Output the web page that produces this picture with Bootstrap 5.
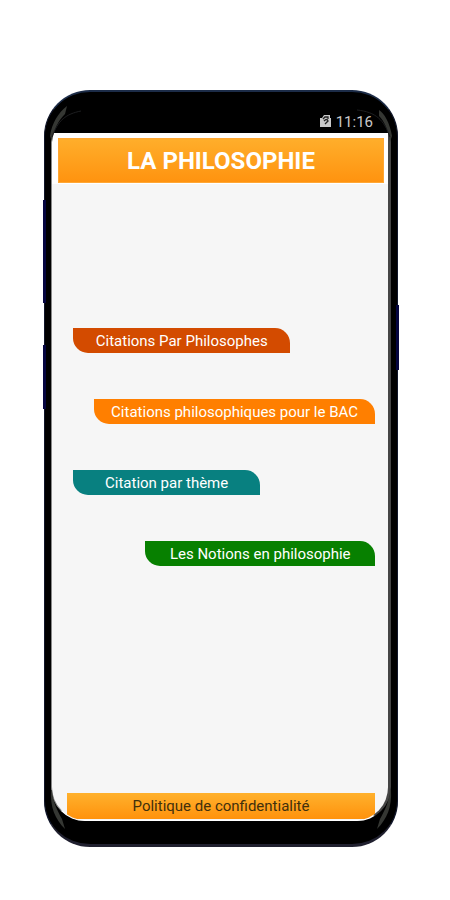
<!DOCTYPE html>
<html lang="fr">
<head>
<meta charset="utf-8">
<meta name="viewport" content="width=device-width, initial-scale=1">
<title>La Philosophie</title>
<link href="https://cdn.jsdelivr.net/npm/bootstrap@5.3.0/dist/css/bootstrap.min.css" rel="stylesheet">
<style>
body { background: #fff; font-family: Roboto, "Noto Sans", sans-serif; }
.stage { min-height: 100vh; padding: 90px 52px 53px 44px; }
.phone { background: #000; border: 1px solid #10162a; border-top: 2px solid #1c2c48; border-bottom: 3px solid #20202f; border-radius: 46px; padding: 0 6px 23px; }
.side-key { width: 3px; background: #05053f; }
.key-volume { left: -2px; top: 108px; height: 103px; }
.key-assist { left: -2px; top: 253px; height: 64px; }
.key-power { right: -2px; top: 213px; height: 65px; }
.glint { width: 38px; height: 46px; }
.glint-tl { left: 2px; top: 10px; }
.glint-tr { right: 2px; top: 10px; transform: scaleX(-1); }
.glint-bl { left: 2px; bottom: 8px; transform: scaleY(-1); }
.glint-br { right: 2px; bottom: 8px; transform: scale(-1); }
.status { height: 41px; padding: 0 18px 1px 0; color: #c9c9c9; font-size: 15px; line-height: 20px; }
.screen { background: #f6f6f6; border-left: 1px solid #888; border-right: 3px solid #454545; border-bottom: 1px solid #fff; border-radius: 0 0 34px 34px; }
.title-frame { background: #fff; padding: 5px 4px 1px 6px; }
.title-bar { background: linear-gradient(#ffae2b, #ff930f); border: 1px solid #ffa735; height: 45px; font-size: 24px; line-height: 28px; font-weight: 700; color: #fff; }
.menu { gap: 46px; padding: 0 13px 84px 21px; }
.leaf { height: 25px; border-radius: 0 15px 0 15px; color: #fff; font-size: 15px; line-height: 26px; }
.leaf:hover { color: #fff; }
.leaf-red { background: #d34b00; width: 72%; }
.leaf-orange { background: #ff7f00; width: 93%; }
.leaf-teal { background: #088080; width: 62%; }
.leaf-green { background: #078000; width: 76%; }
.foot { padding: 0 13px 1px 15px; }
.privacy { background: linear-gradient(#ffb12d, #ff920c); height: 26px; color: #42300c; font-size: 15px; line-height: 26px; }
</style>
<script src="https://cdn.jsdelivr.net/npm/bootstrap@5.3.0/dist/js/bootstrap.bundle.min.js"></script>
</head>
<body>
<div class="stage d-flex">
  <div class="phone position-relative flex-fill d-flex flex-column">
    <span class="side-key key-volume position-absolute"></span>
    <span class="side-key key-assist position-absolute"></span>
    <span class="side-key key-power position-absolute"></span>
    <svg class="glint glint-tl position-absolute" viewBox="0 0 38 46" aria-hidden="true"><path d="M3 34C5 21 11 11 20 4L18 12C11 19 7 27 5 40Z" fill="#353733"/><path d="M5 35C11 18 19 12 34 9" fill="none" stroke="#1d1e20"/></svg>
    <svg class="glint glint-tr position-absolute" viewBox="0 0 38 46" aria-hidden="true"><path d="M3 34C5 21 11 11 16 8L16 14C11 19 7 27 5 40Z" fill="#353733"/><path d="M5 35C11 18 19 10 38 8" fill="none" stroke="#1d1e20"/></svg>
    <svg class="glint glint-bl position-absolute" viewBox="0 0 38 46" aria-hidden="true"><path d="M4 46C3 29 8 17 18 7L15 17C10 26 6 34 5 46Z" fill="#353733"/></svg>
    <svg class="glint glint-br position-absolute" viewBox="0 0 38 46" aria-hidden="true"><path d="M4 46C3 29 8 17 18 7L15 17C10 26 6 34 5 46Z" fill="#353733"/></svg>

    <div class="status d-flex justify-content-end align-items-end gap-1">
      <svg class="mb-1" width="12" height="14" viewBox="0 0 12 14" aria-hidden="true"><path d="M0 4H2L4 1H10V4H11V13H0Z" fill="#c9c9c9"/><path d="M3 5L5 3H8V5M4 7Q7 4 8 7L5 10" fill="none" stroke="#222" stroke-width="1.3"/></svg>
      <span>11:16</span>
    </div>

    <main class="screen flex-fill d-flex flex-column overflow-hidden">
      <header class="title-frame">
        <h1 class="title-bar d-flex align-items-center justify-content-center m-0">LA PHILOSOPHIE</h1>
      </header>
      <nav class="menu flex-fill d-flex flex-column justify-content-center" aria-label="Citations">
        <a href="#philosophes" class="leaf leaf-red text-center text-decoration-none">Citations Par Philosophes</a>
        <a href="#bac" class="leaf leaf-orange align-self-end text-center text-decoration-none">Citations philosophiques pour le BAC</a>
        <a href="#theme" class="leaf leaf-teal text-center text-decoration-none">Citation par thème</a>
        <a href="#notions" class="leaf leaf-green align-self-end text-center text-decoration-none">Les Notions en philosophie</a>
      </nav>
      <footer class="foot">
        <a href="#confidentialite" class="privacy d-block text-center text-decoration-none">Politique de confidentialité</a>
      </footer>
    </main>
  </div>
</div>
</body>
</html>
